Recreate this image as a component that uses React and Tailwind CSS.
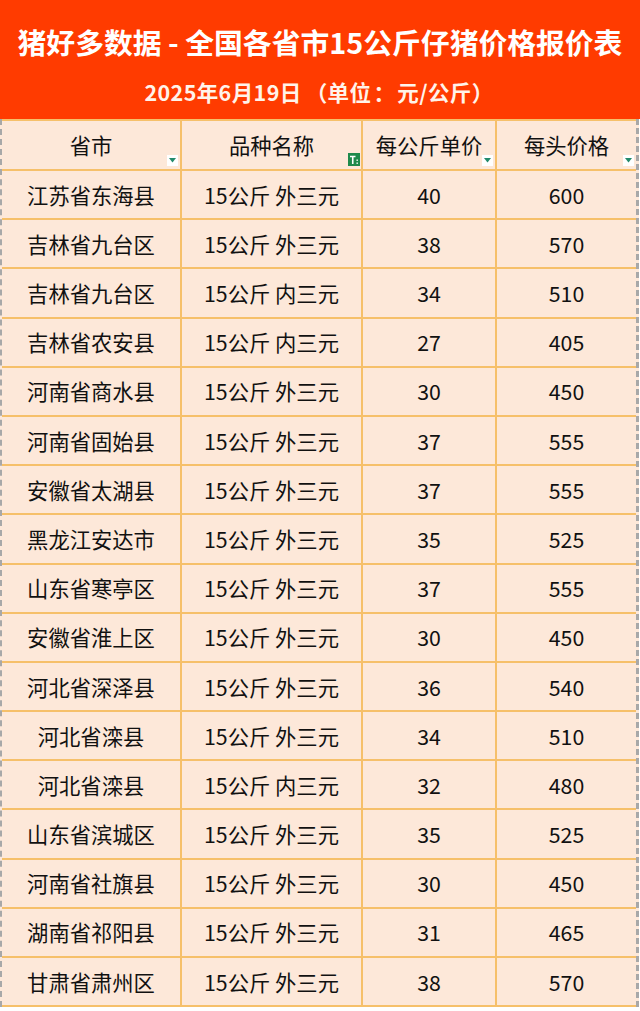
import React from 'react';

const rows = [
  ['江苏省东海县', '15公斤 外三元', '40', '600'],
  ['吉林省九台区', '15公斤 外三元', '38', '570'],
  ['吉林省九台区', '15公斤 内三元', '34', '510'],
  ['吉林省农安县', '15公斤 内三元', '27', '405'],
  ['河南省商水县', '15公斤 外三元', '30', '450'],
  ['河南省固始县', '15公斤 外三元', '37', '555'],
  ['安徽省太湖县', '15公斤 外三元', '37', '555'],
  ['黑龙江安达市', '15公斤 外三元', '35', '525'],
  ['山东省寒亭区', '15公斤 外三元', '37', '555'],
  ['安徽省淮上区', '15公斤 外三元', '30', '450'],
  ['河北省深泽县', '15公斤 外三元', '36', '540'],
  ['河北省滦县', '15公斤 外三元', '34', '510'],
  ['河北省滦县', '15公斤 内三元', '32', '480'],
  ['山东省滨城区', '15公斤 外三元', '35', '525'],
  ['河南省社旗县', '15公斤 外三元', '30', '450'],
  ['湖南省祁阳县', '15公斤 外三元', '31', '465'],
  ['甘肃省肃州区', '15公斤 外三元', '38', '570'],
];

const font = { fontFamily: '"Noto Sans CJK SC", "Noto Sans", sans-serif' };

function DropBtn() {
  return (
    <span className="absolute right-[2px] bottom-[3px] w-[11px] h-[11px] bg-white flex items-center justify-center">
      <svg width="7" height="5" viewBox="0 0 7 5">
        <path d="M0 0 L7 0 L3.5 4.5 Z" fill="#238a6c" />
      </svg>
    </span>
  );
}

function FilterBtn() {
  return (
    <span className="absolute right-[1px] bottom-[3px] w-[12px] h-[13px] bg-[#1f8a4c] flex items-center justify-center">
      <svg width="10" height="10" viewBox="0 0 10 10">
        <path d="M1 1.5 H6.5 M3.75 1.5 V9" stroke="#fff" strokeWidth="1.6" fill="none" />
        <rect x="7.5" y="4.5" width="1.4" height="1.4" fill="#fff" />
        <rect x="7.5" y="7.5" width="1.4" height="1.4" fill="#fff" />
      </svg>
    </span>
  );
}

const cols = 'grid grid-cols-[180px_181px_134px_139px]';

export default function App() {
  return (
    <div className="w-[640px] h-[1011px] overflow-hidden bg-white" style={font}>
      <div className="h-[119px] bg-[#ff3b00] flex flex-col items-center pt-[24px]">
        <div className="text-white font-bold text-[28.8px] leading-[36px]">
          猪好多数据 - 全国各省市15公斤仔猪价格报价表
        </div>
        <div className="mt-[18px] text-[#fff3ea] font-bold text-[21.5px] leading-[28px] tracking-[0.4px]">
          2025年6月19日<span className="ml-[4px]">（</span>单位<span className="mx-[2px]">：</span>元/公斤<span className="mr-[2px]">）</span>
        </div>
      </div>
      <div className="w-[639px] border-l-2 border-r-[3px] border-dashed border-[#a8a8a8] bg-[#fde8d9]">
        <div className={`${cols} border-t-2 border-b-2 border-[#f6c06a] h-[52px] text-[21.3px] text-[#111]`}>
          <div className="relative flex items-center justify-center border-r-2 border-[#f6c06a]">
            省市
            <DropBtn />
          </div>
          <div className="relative flex items-center justify-center border-r-2 border-[#f6c06a]">
            品种名称
            <FilterBtn />
          </div>
          <div className="relative flex items-center justify-center border-r-2 border-[#f6c06a]">
            每公斤单价
            <DropBtn />
          </div>
          <div className="relative flex items-center justify-center">
            每头价格
            <DropBtn />
          </div>
        </div>
        {rows.map((r, i) => (
          <div
            key={i}
            className={`${cols} border-b-2 border-[#f6c06a] h-[49.2px] text-[21.3px] text-[#111]`}
          >
            <div className="flex items-center justify-center border-r-2 border-[#f6c06a]">{r[0]}</div>
            <div className="flex items-center justify-center border-r-2 border-[#f6c06a]">{r[1]}</div>
            <div className="flex items-center justify-center border-r-2 border-[#f6c06a]">{r[2]}</div>
            <div className="flex items-center justify-center">{r[3]}</div>
          </div>
        ))}
      </div>
    </div>
  );
}
